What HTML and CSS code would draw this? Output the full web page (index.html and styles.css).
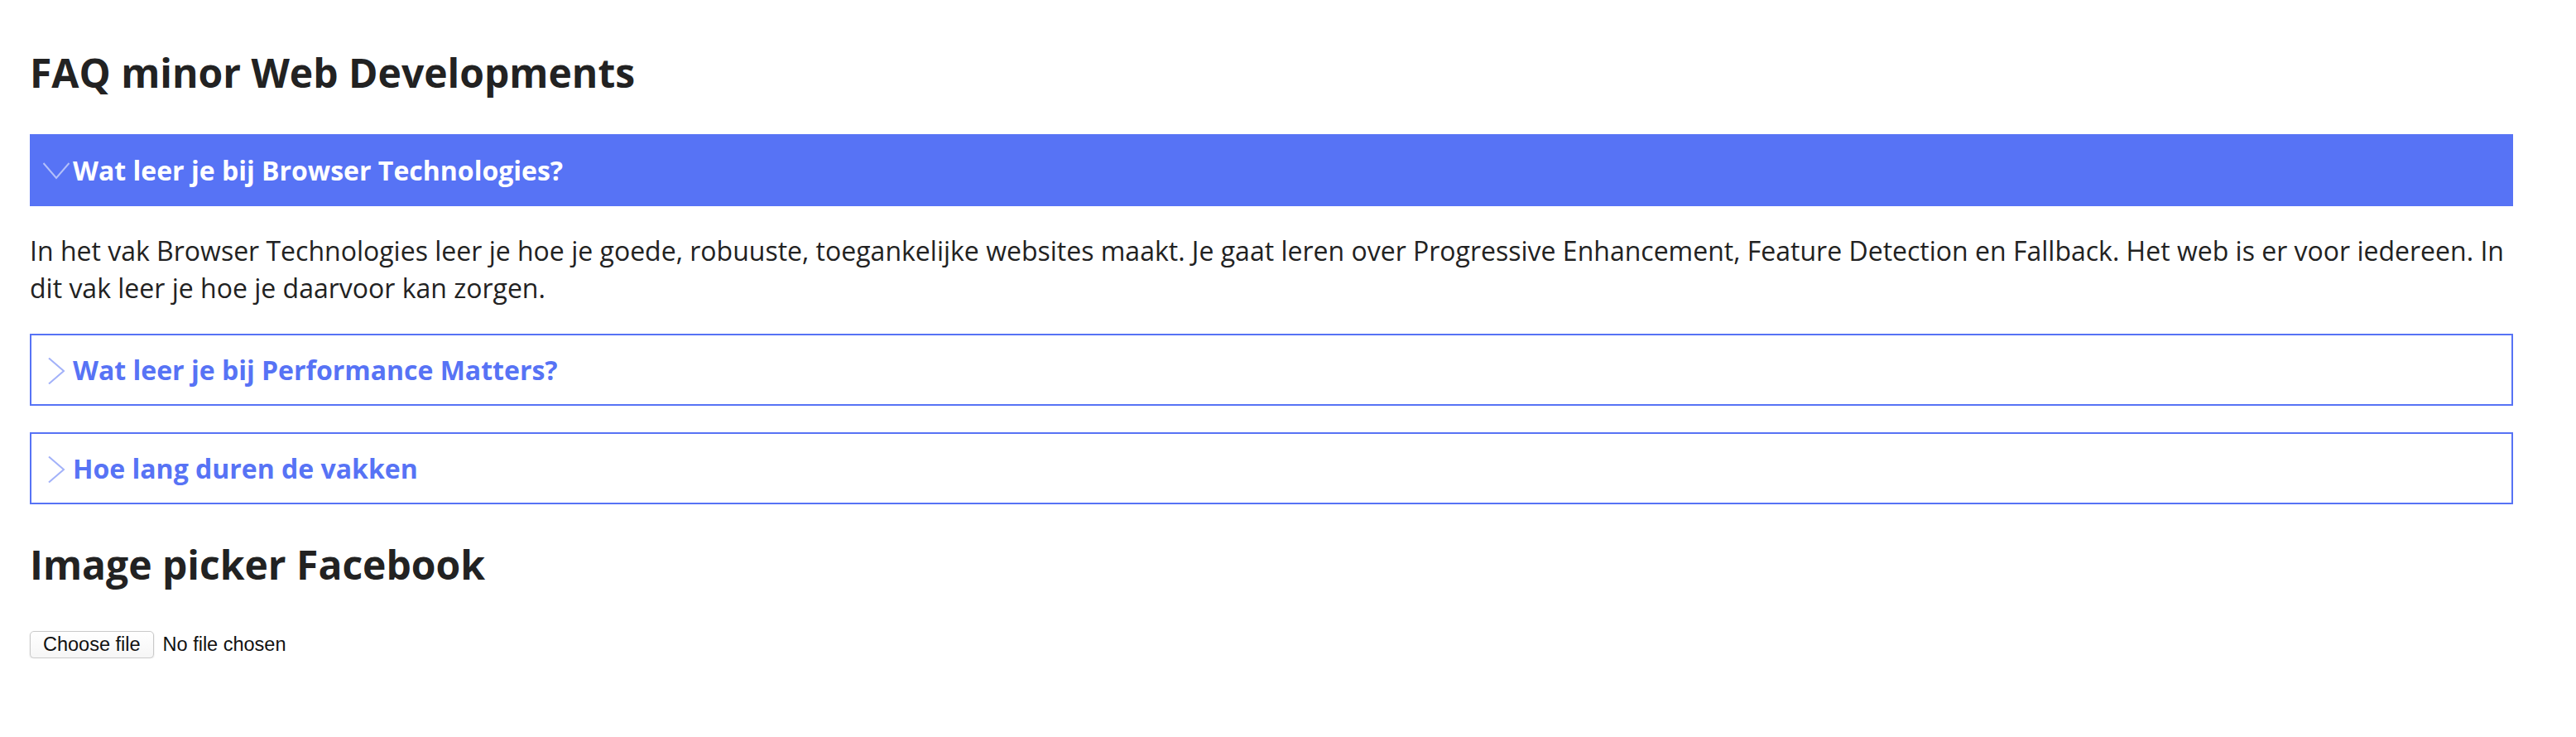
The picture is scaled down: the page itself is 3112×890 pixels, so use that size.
FILE: index.html
```html
<!DOCTYPE html>
<html lang="nl">
<head>
<meta charset="utf-8">
<title>FAQ minor Web Developments</title>
<link rel="stylesheet" href="styles.css">
</head>
<body>
<main class="page">
  <h1 class="title">FAQ minor Web Developments</h1>

  <details class="faq" open>
    <summary class="faq-q">
      <svg class="chev" viewBox="0 0 32 32" width="32" height="32" aria-hidden="true"><polyline points="7,0.5 25,16 7,31.5" fill="none" stroke="currentColor" stroke-width="2"/></svg>
      <span>Wat leer je bij Browser Technologies?</span>
    </summary>
    <p class="faq-a">In het vak Browser Technologies leer je hoe je goede, robuuste, toegankelijke websites maakt. Je gaat leren over Progressive Enhancement, Feature Detection en Fallback. Het web is er voor iedereen. In dit vak leer je hoe je daarvoor kan zorgen.</p>
  </details>

  <details class="faq">
    <summary class="faq-q">
      <svg class="chev" viewBox="0 0 32 32" width="32" height="32" aria-hidden="true"><polyline points="7,0.5 25,16 7,31.5" fill="none" stroke="currentColor" stroke-width="2"/></svg>
      <span>Wat leer je bij Performance Matters?</span>
    </summary>
  </details>

  <details class="faq">
    <summary class="faq-q">
      <svg class="chev" viewBox="0 0 32 32" width="32" height="32" aria-hidden="true"><polyline points="7,0.5 25,16 7,31.5" fill="none" stroke="currentColor" stroke-width="2"/></svg>
      <span>Hoe lang duren de vakken</span>
    </summary>
  </details>

  <h2 class="title title-2">Image picker Facebook</h2>

  <label class="file">
    <input class="file-input" type="file" accept="image/*">
    <span class="file-btn">Choose file</span>
    <span class="file-name">No file chosen</span>
  </label>
</main>
</body>
</html>
```

FILE: styles.css
```css
html, body {
  margin: 0;
  padding: 0;
  background: #ffffff;
}

body {
  font-family: "Open Sans", "Liberation Sans", sans-serif;
  color: #222222;
}

.page {
  padding: 0 76px 0 36px;
}

.title {
  font-size: 48px;
  font-weight: 700;
  line-height: 64px;
  margin: 56px 0 42px;
  color: #222222;
}

.title-2 {
  margin: 41px 0 48px;
}

.faq {
  margin: 0 0 32px;
}

.faq-q {
  list-style: none;
  display: flex;
  align-items: center;
  gap: 4px;
  border: 2px solid #5773f5;
  padding: 20px 0 19px 14px;
  font-size: 32px;
  font-weight: 700;
  line-height: 44px;
  color: #5773f5;
  cursor: pointer;
}

.faq-q::-webkit-details-marker {
  display: none;
}

.faq[open] .faq-q {
  background: #5773f5;
  color: #ffffff;
}

.chev {
  flex: none;
  opacity: 0.55;
  transform: translateY(1px);
}

.faq[open] .chev {
  transform: rotate(90deg);
}

.faq-a {
  margin: 32px 0;
  font-size: 32px;
  line-height: 44.8px;
  color: #222222;
}

.file {
  display: inline-flex;
  align-items: center;
  gap: 11px;
  font-family: "Liberation Sans", Arial, sans-serif;
  font-size: 23.5px;
  color: #111111;
  cursor: pointer;
}

.file-input {
  display: none;
}

.file-btn {
  display: inline-flex;
  align-items: center;
  height: 33px;
  box-sizing: border-box;
  padding: 0 15px;
  border: 1px solid #c9c9c9;
  border-radius: 5px;
  background: linear-gradient(#ffffff, #f6f6f6);
  box-shadow: 0 1px 2px rgba(0, 0, 0, 0.14);
}
```
